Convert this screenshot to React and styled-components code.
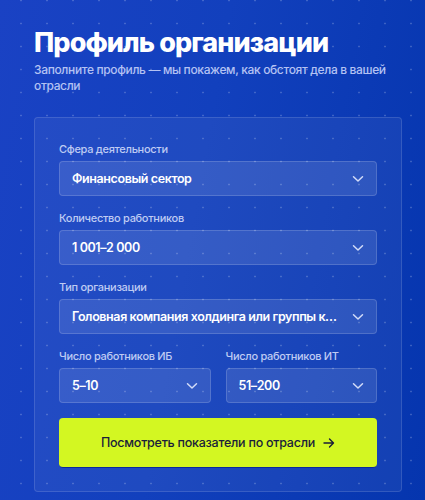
import React from 'react';
import styled, {createGlobalStyle} from 'styled-components';

const GlobalStyle = createGlobalStyle`
  html, body {
    margin: 0;
    padding: 0;
  }
  body {
    font-family: Inter, "Noto Sans", "Liberation Sans", sans-serif;
    background: #0a36b0;
  }
`;

const Page = styled.div`
  min-height: 500px;
  box-sizing: border-box;
  padding: 26px 23px 0 34px;
  background-color: #0d39b4;
  background-image:
    radial-gradient(circle, rgba(255, 255, 255, 0.2) 0.8px, transparent 1.2px),
    linear-gradient(100deg, #1a42c4 0%, #1240bd 45%, #0535ae 100%);
  background-size: 26px 23px, 100% 100%;
  background-position: 8px 12px, 0 0;
  overflow: hidden;
`;

const Title = styled.h1`
  margin: 0;
  font-size: 27px;
  line-height: 34px;
  font-weight: 800;
  letter-spacing: -0.9px;
  color: #ffffff;
`;

const Subtitle = styled.p`
  margin: 2px 0 0;
  font-size: 12px;
  line-height: 16px;
  font-weight: 500;
  letter-spacing: -0.35px;
  color: #b4c2f3;
`;

const Card = styled.form`
  margin-top: 23px;
  padding: 24px 24px 23px;
  display: flex;
  flex-direction: column;
  gap: 15px;
  border: 1px solid rgba(255, 255, 255, 0.13);
  border-radius: 4px;
  background: rgba(255, 255, 255, 0.055);
`;

const Row = styled.div`
  display: grid;
  grid-template-columns: 1fr 1fr;
  gap: 15px;
`;

const Field = styled.label`
  display: flex;
  flex-direction: column;
  gap: 5px;
  min-width: 0;
`;

const Label = styled.span`
  font-size: 11px;
  line-height: 14px;
  font-weight: 500;
  letter-spacing: -0.3px;
  color: #bfcbf3;
`;

const SelectBox = styled.div`
  height: 35px;
  box-sizing: border-box;
  display: flex;
  align-items: center;
  gap: 8px;
  padding: 0 12px;
  border: 1px solid rgba(255, 255, 255, 0.16);
  border-radius: 4px;
  background: rgba(255, 255, 255, 0.1);
`;

const Value = styled.span`
  flex: 1;
  min-width: 0;
  white-space: nowrap;
  overflow: hidden;
  text-overflow: ellipsis;
  font-size: 12.5px;
  font-weight: 600;
  letter-spacing: -0.4px;
  color: #ffffff;
`;

const Chevron = () => (
    <svg width="12" height="8" viewBox="0 0 12 8" fill="none">
        <path d="M1.5 1.8 6 6 10.5 1.8" stroke="#d3dcf8" strokeWidth="1.5" strokeLinecap="round" strokeLinejoin="round"/>
    </svg>
);

const Select = ({label, value}) => (
    <Field>
        <Label>{label}</Label>
        <SelectBox>
            <Value>{value}</Value>
            <Chevron/>
        </SelectBox>
    </Field>
);

const SubmitButton = styled.button`
  height: 50px;
  display: flex;
  align-items: center;
  justify-content: center;
  gap: 8px;
  border: none;
  border-bottom: 1px solid #0a2a9c;
  border-radius: 4px;
  background: #d3f722;
  font-family: inherit;
  font-size: 12.5px;
  font-weight: 500;
  letter-spacing: -0.25px;
  color: #1a1d3a;
  cursor: pointer;
`;

const Arrow = () => (
    <svg width="12" height="10" viewBox="0 0 12 10" fill="none">
        <path d="M1 5h9.5M6.5 1 10.5 5 6.5 9" stroke="#1a1d3a" strokeWidth="1.4" strokeLinecap="round" strokeLinejoin="round"/>
    </svg>
);

export default function App() {
    return (
        <>
            <GlobalStyle/>
            <Page>
                <Title>Профиль организации</Title>
                <Subtitle>Заполните профиль — мы покажем, как обстоят дела в вашей отрасли</Subtitle>
                <Card onSubmit={e => e.preventDefault()}>
                    <Select label="Сфера деятельности" value="Финансовый сектор"/>
                    <Select label="Количество работников" value="1 001–2 000"/>
                    <Select label="Тип организации" value="Головная компания холдинга или группы компаний"/>
                    <Row>
                        <Select label="Число работников ИБ" value="5–10"/>
                        <Select label="Число работников ИТ" value="51–200"/>
                    </Row>
                    <SubmitButton type="submit">
                        Посмотреть показатели по отрасли
                        <Arrow/>
                    </SubmitButton>
                </Card>
            </Page>
        </>
    );
}
